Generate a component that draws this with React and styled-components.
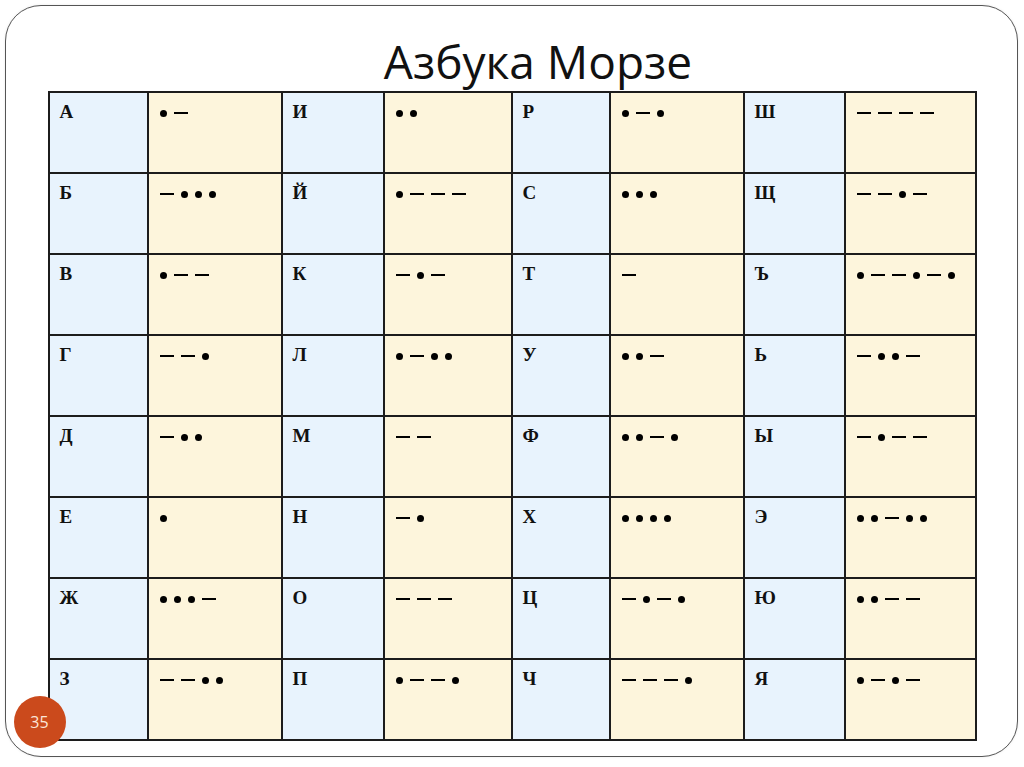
import React from "react";
import styled, { createGlobalStyle } from "styled-components";

const Global = createGlobalStyle`
  html, body { margin: 0; padding: 0; background: #ffffff; }
  body { font-family: "Liberation Serif", serif; }
`;

const Page = styled.div`
  padding: 5px;
  width: 1024px;
  height: 767px;
  box-sizing: border-box;
`;

const Frame = styled.div`
  position: relative;
  width: 1013px;
  height: 752px;
  box-sizing: border-box;
  border: 1.5px solid #555;
  border-radius: 36px;
  background: #fff;
  box-shadow: 0 0 3px rgba(0,0,0,0.08);
  display: flex;
  flex-direction: column;
  padding: 32px 0 0 41.5px;
`;

const Title = styled.h1`
  margin: 0 0 7px 0;
  padding-left: 53px;
  padding-right: 41.5px;
  text-align: center;
  font-family: "Open Sans", "Noto Sans", sans-serif;
  font-weight: 400;
  font-size: 46px;
  line-height: 46px;
  color: #111;
`;

const Grid = styled.div`
  display: grid;
  grid-template-columns: 97px 132px 100px 126px 96px 132px 99px 129px;
  grid-auto-rows: 79px;
  gap: 2px;
  padding: 2px;
  background: #1c1c1c;
  width: max-content;
`;

const Cell = styled.div`
  background: ${(p) => (p.$kind === "letter" ? "#e8f3fd" : "#fdf5dc")};
  box-sizing: border-box;
`;

const Letter = styled(Cell)`
  padding: 9px 0 0 10px;
  font-family: "Liberation Serif", serif;
  font-weight: 700;
  font-size: 19px;
  line-height: 20px;
  color: #111;
`;

const Code = styled(Cell)`
  padding: 16px 0 0 11px;
`;

const Symbols = styled.div`
  display: flex;
  align-items: center;
  gap: 7px;
  height: 8px;
`;

const Dot = styled.span`
  width: 7px;
  height: 7px;
  border-radius: 50%;
  background: #000;
  flex: none;
`;

const Dash = styled.span`
  width: 14px;
  height: 2px;
  background: #000;
  flex: none;
`;

const Badge = styled.div`
  position: absolute;
  left: 7.5px;
  top: 689.5px;
  width: 52px;
  height: 52px;
  border-radius: 50%;
  background: #cb4a1c;
  color: #fbe6d8;
  font-family: "Open Sans", "Noto Sans", sans-serif;
  font-size: 16px;
  display: flex;
  align-items: center;
  justify-content: center;
`;

const columns = [
  [["А", ".-"], ["Б", "-..."], ["В", ".--"], ["Г", "--."], ["Д", "-.."], ["Е", "."], ["Ж", "...-"], ["З", "--.."]],
  [["И", ".."], ["Й", ".---"], ["К", "-.-"], ["Л", ".-.."], ["М", "--"], ["Н", "-."], ["О", "---"], ["П", ".--."]],
  [["Р", ".-."], ["С", "..."], ["Т", "-"], ["У", "..-"], ["Ф", "..-."], ["Х", "...."], ["Ц", "-.-."], ["Ч", "---."]],
  [["Ш", "----"], ["Щ", "--.-"], ["Ъ", ".--.-."], ["Ь", "-..-"], ["Ы", "-.--"], ["Э", "..-.."], ["Ю", "..--"], ["Я", ".-.-"]],
];

function Morse({ code }) {
  return (
    <Symbols>
      {code.split("").map((c, i) => (c === "." ? <Dot key={i} /> : <Dash key={i} />))}
    </Symbols>
  );
}

export default function App() {
  const cells = [];
  for (let r = 0; r < 8; r++) {
    for (let c = 0; c < 4; c++) {
      const [l, code] = columns[c][r];
      cells.push(<Letter key={`l${r}${c}`} $kind="letter">{l}</Letter>);
      cells.push(
        <Code key={`c${r}${c}`} $kind="code">
          <Morse code={code} />
        </Code>
      );
    }
  }
  return (
    <>
      <Global />
      <Page>
        <Frame>
          <Title>Азбука Морзе</Title>
          <Grid>{cells}</Grid>
          <Badge>35</Badge>
        </Frame>
      </Page>
    </>
  );
}
